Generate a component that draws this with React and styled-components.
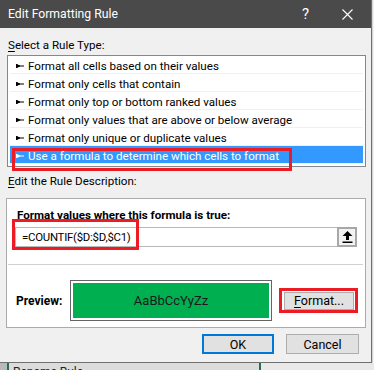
import React from "react";
import styled, { createGlobalStyle } from "styled-components";

const GlobalStyle = createGlobalStyle`
  html, body {
    margin: 0;
    padding: 0;
  }
  body {
    background: #e8e8e8;
    font-family: "Segoe UI", Roboto, "Noto Sans", sans-serif;
  }
`;

const Screen = styled.div`
  width: 374px;
  height: 370px;
  overflow: hidden;
  display: grid;
  grid-template-columns: 372px 2px;
  grid-template-rows: 363px 7px;
  background: #ececec;
`;

const SideStrip = styled.div`
  background: #f2f2f2;
  border-left: 1px solid #d4d4d4;
`;

const BottomStrip = styled.div`
  grid-column: 1 / span 2;
  display: flex;
  background: #b9b9b9;
  padding-left: 7px;
  overflow: hidden;
`;

const SheetPanel = styled.div`
  width: 246px;
  border-left: 2px solid #217346;
  border-right: 2px solid #217346;
  background: #dcdcdc;
  font-size: 12px;
  line-height: 12px;
  padding: 3px 0 0 4px;
  color: #222;
`;

const SheetRest = styled.div`
  flex: 1;
  background: #e9e9e9;
`;

const Dialog = styled.div`
  display: flex;
  flex-direction: column;
  background: #f0f0f0;
  border-right: 1px solid #707070;
  border-bottom: 1px solid #707070;
  font-size: 11.6px;
  color: #000;
`;

const TitleBar = styled.div`
  height: 28px;
  flex: none;
  display: flex;
  align-items: center;
  background: #4a4a4a;
  color: #fff;
  padding-left: 8px;
`;

const Title = styled.div`
  flex: 1;
  font-size: 12.2px;
`;

const HelpMark = styled.div`
  font-size: 15px;
  width: 40px;
`;

const CloseIcon = styled.svg`
  width: 11px;
  height: 11px;
  margin-right: 18px;
`;

const Body = styled.div`
  flex: 1;
  display: flex;
  flex-direction: column;
  padding: 9px 0 0 6px;
`;

const SectionLabel = styled.div`
  line-height: 16px;
  padding-left: 2px;
  margin: ${(p) => p.$margin || "0"};
`;

const Key = styled.span`
  text-decoration: underline;
  text-underline-offset: 2px;
`;

const ListBox = styled.div`
  position: relative;
  width: 355px;
  margin-left: 1px;
  background: #fff;
  border: 1px solid #828790;
  padding: 0 0 2px 2px;
`;

const RuleRow = styled.div`
  box-sizing: border-box;
  height: 18px;
  padding: 2px 0 0 6px;
  display: flex;
  align-items: center;
  gap: 4px;
  margin-right: 2px;
  border-bottom: 1px solid #f0f0f0;
  background: ${(p) => (p.$selected ? "#3399ff" : "transparent")};
  color: ${(p) => (p.$selected ? "#fff" : "#000")};
  white-space: nowrap;
`;

const Highlight = styled.div`
  position: absolute;
  left: ${(p) => p.$left}px;
  top: ${(p) => p.$top}px;
  width: ${(p) => p.$width}px;
  height: ${(p) => p.$height}px;
  border: 3px solid #ed1c24;
  box-sizing: border-box;
  pointer-events: none;
`;

const DescBox = styled.div`
  position: relative;
  width: 358px;
  height: 128px;
  background: #fff;
  border: 1px solid #ababab;
  display: flex;
  flex-direction: column;
`;

const Heading = styled.div`
  font-weight: bold;
  line-height: 15px;
  padding: 9px 0 0 10px;
`;

const FormulaField = styled.div`
  display: flex;
  align-items: center;
  width: 334px;
  height: 18px;
  margin: 4px 0 0 8px;
  border: 1px solid #b8b8b8;
  padding-left: 6px;
`;

const FormulaText = styled.div`
  flex: 1;
  font-size: 11.4px;
  letter-spacing: -0.25px;
`;

const CollapseButton = styled.div`
  width: 16px;
  height: 16px;
  border: 2px solid #a8a8a8;
  background: #f3f3f3;
  display: flex;
  align-items: center;
  justify-content: center;
  margin-right: -1px;
`;

const Divider = styled.div`
  height: 1px;
  background: #d2d2d2;
  margin: 17px 2px 0 1px;
`;

const PreviewRow = styled.div`
  display: flex;
  align-items: center;
  margin-top: 15px;
  padding-left: 9px;
`;

const PreviewLabel = styled.div`
  font-weight: bold;
  font-size: 12px;
  width: 54px;
`;

const PreviewFrame = styled.div`
  width: 196px;
  height: 35px;
  border: 1px solid #646464;
  padding: 2px;
  background: #fff;
`;

const PreviewSample = styled.div`
  height: 100%;
  background: #00b050;
  display: flex;
  align-items: center;
  justify-content: center;
  font-size: 13px;
  color: #1a1a1a;
`;

const PushButton = styled.div`
  position: relative;
  box-sizing: border-box;
  width: ${(p) => p.$width || 72}px;
  height: ${(p) => p.$height || 20}px;
  margin-left: ${(p) => p.$gap || 0}px;
  display: flex;
  align-items: center;
  justify-content: center;
  background: #e1e1e1;
  border: ${(p) => (p.$default ? "2px solid #0078d7" : "1px solid #adadad")};
  font-size: 12.5px;
`;

const ButtonBar = styled.div`
  display: flex;
  padding: 6px 0 0 196px;
`;

const RuleMark = () => (
  <svg width="8" height="6" viewBox="0 0 8 6">
    <rect x="0" y="1" width="1.4" height="4" fill="currentColor" />
    <polygon points="1,1.2 4,2.6 4,3.4 1,4.8" fill="currentColor" />
    <rect x="3" y="2.5" width="5" height="1" fill="currentColor" />
  </svg>
);

const rules = [
  "Format all cells based on their values",
  "Format only cells that contain",
  "Format only top or bottom ranked values",
  "Format only values that are above or below average",
  "Format only unique or duplicate values",
  "Use a formula to determine which cells to format",
];

export default function App() {
  return (
    <Screen>
      <GlobalStyle />
      <Dialog>
        <TitleBar>
          <Title>Edit Formatting Rule</Title>
          <HelpMark>?</HelpMark>
          <CloseIcon viewBox="0 0 11 11">
            <path d="M0.5 0.5 L10.5 10.5 M10.5 0.5 L0.5 10.5" stroke="#fff" strokeWidth="1.1" />
          </CloseIcon>
        </TitleBar>
        <Body>
          <SectionLabel $margin="0 0 2px">
            <Key>S</Key>elect a Rule Type:
          </SectionLabel>
          <ListBox>
            {rules.map((r, i) => (
              <RuleRow key={r} $selected={i === rules.length - 1}>
                <RuleMark />
                {r}
              </RuleRow>
            ))}
            <Highlight $left={4} $top={92} $width={280} $height={23} />
          </ListBox>
          <SectionLabel $margin="6px 0 9px">
            <Key>E</Key>dit the Rule Description:
          </SectionLabel>
          <DescBox>
            <Heading>
              F<Key>o</Key>rmat values where this formula is true:
            </Heading>
            <FormulaField>
              <FormulaText>=COUNTIF($D:$D,$C1)</FormulaText>
              <CollapseButton>
                <svg width="11" height="12" viewBox="0 0 11 12">
                  <polygon points="5.5,0 10.5,5 7,5 7,9 4,9 4,5 0.5,5" fill="#000" />
                  <rect x="0.5" y="10.5" width="10" height="1.5" fill="#000" />
                </svg>
              </CollapseButton>
            </FormulaField>
            <Divider />
            <PreviewRow>
              <PreviewLabel>Preview:</PreviewLabel>
              <PreviewFrame>
                <PreviewSample>AaBbCcYyZz</PreviewSample>
              </PreviewFrame>
              <PushButton $width={70} $height={18} $gap={12}>
                <span>
                  <Key>F</Key>ormat...
                </span>
              </PushButton>
            </PreviewRow>
            <Highlight $left={5} $top={20} $width={127} $height={31} />
            <Highlight $left={272} $top={89} $width={79} $height={25} />
          </DescBox>
          <ButtonBar>
            <PushButton $default $width={72} $height={20}>OK</PushButton>
            <PushButton $width={73} $height={20} $gap={12}>Cancel</PushButton>
          </ButtonBar>
        </Body>
      </Dialog>
      <SideStrip />
      <BottomStrip>
        <SheetPanel>Rename Rule</SheetPanel>
        <SheetRest />
      </BottomStrip>
    </Screen>
  );
}
